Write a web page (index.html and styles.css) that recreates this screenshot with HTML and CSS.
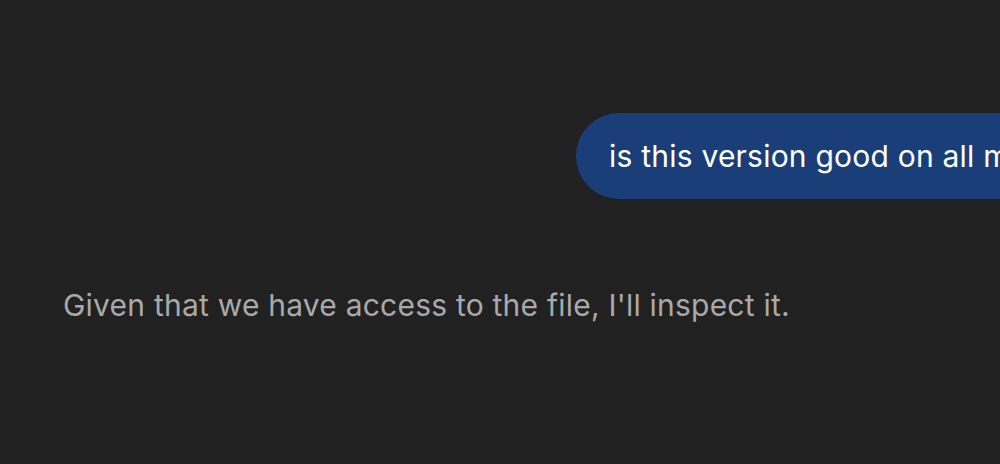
FILE: index.html
```html
<!DOCTYPE html>
<html>
<head>
<meta charset="utf-8">
<link rel="stylesheet" href="styles.css">
</head>
<body>
<main class="chat">
  <div class="row-user">
    <div class="bubble">is this version good on all mobile devices?</div>
  </div>
  <p class="reply">Given that we have access to the file, I'll inspect it.</p>
</main>
</body>
</html>
```
FILE: styles.css
```css
html, body {
  margin: 0;
  padding: 0;
  background: #212121;
  width: 1000px;
  height: 464px;
  overflow: hidden;
}
.chat {
  font-family: "Inter", "Noto Sans", sans-serif;
  letter-spacing: 0.22px;
  padding-top: 113px;
}
.row-user {
  padding-left: 576px;
  display: flex;
  white-space: nowrap;
}
.bubble {
  background: #1a3f78;
  color: #ffffff;
  font-size: 30px;
  line-height: 36px;
  padding: 25px 33px;
  border-radius: 43px;
}
.reply {
  margin: 0;
  padding: 88px 0 0 63px;
  color: #a9a9a9;
  font-size: 30px;
  line-height: 36px;
}
```
